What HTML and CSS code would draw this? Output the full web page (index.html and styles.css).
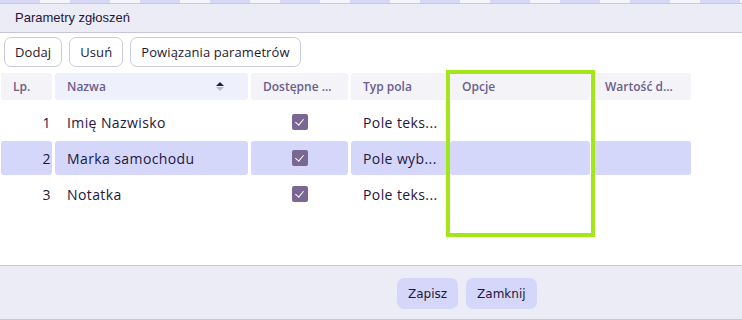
FILE: index.html
```html
<!DOCTYPE html>
<html>
  <head>
    <meta charset="utf-8">
    <title>Parametry zgłoszeń</title>
    <link rel="stylesheet" href="styles.css">
  </head>
  <body>
    <div class="backdrop"></div>

    <div class="dialog">
      <div class="titleBar">Parametry zgłoszeń</div>

      <div class="toolbar">
        <button class="toolButton">Dodaj</button>
        <button class="toolButton">Usuń</button>
        <button class="toolButton">Powiązania parametrów</button>
      </div>

      <div class="gridWrap">
        <div class="grid">
          <div class="head">Lp.</div>
          <div class="head headSorted">Nazwa
            <span class="sortIcon"><i class="up"></i><i class="down"></i></span>
          </div>
          <div class="head">Dostępne ...</div>
          <div class="head">Typ pola</div>
          <div class="head">Opcje</div>
          <div class="head">Wartość d...</div>

          <div class="cell num">1</div>
          <div class="cell">Imię Nazwisko</div>
          <div class="cell center"><span class="check"></span></div>
          <div class="cell">Pole teks...</div>
          <div class="cell"></div>
          <div class="cell"></div>

          <div class="cell num selected">2</div>
          <div class="cell selected">Marka samochodu</div>
          <div class="cell center selected"><span class="check"></span></div>
          <div class="cell selected">Pole wyb...</div>
          <div class="cell selected"></div>
          <div class="cell selected"></div>

          <div class="cell num">3</div>
          <div class="cell">Notatka</div>
          <div class="cell center"><span class="check"></span></div>
          <div class="cell">Pole teks...</div>
          <div class="cell"></div>
          <div class="cell"></div>
        </div>
        <div class="highlight"></div>
      </div>

      <div class="footer">
        <button class="footButton">Zapisz</button>
        <button class="footButton">Zamknij</button>
      </div>
    </div>
  </body>
</html>
```

FILE: styles.css
```css
body {
  margin: 0;
  background-color: #fff;
  font-family: "Open Sans", "Noto Sans", sans-serif;
  color: #221641;
}

.backdrop {
  height: 3px;
  background: repeating-linear-gradient(90deg, #d7d8f6 0px, #d7d8f6 40px, #f4f4fb 40px, #f4f4fb 70px);
}

.dialog {
  border-top: 1px solid #c9c9dd;
}

.titleBar {
  height: 28px;
  line-height: 28px;
  padding-left: 15px;
  background-color: #ececf6;
  border-bottom: 1px solid #c5c6dc;
  font-family: "Liberation Sans", sans-serif;
  font-size: 13px;
  color: #1d1638;
}

.toolbar {
  display: flex;
  gap: 7px;
  padding: 4px 4px 0 4px;
  height: 30px;
}

.toolButton {
  height: 30px;
  padding: 0 10px;
  background-color: #fff;
  border: 1px solid #c9c9dd;
  border-radius: 7px;
  font-family: "Open Sans", sans-serif;
  font-size: 13px;
  letter-spacing: 0.1px;
  color: #1e1a2e;
}

.gridWrap {
  position: relative;
  height: 192px;
  padding: 6px 0 0 1px;
}

.grid {
  display: grid;
  grid-template-columns: 51px 193px 97px 96px 140px 98px;
  grid-template-rows: 30px 34px 34px 34px;
  column-gap: 3px;
  row-gap: 2px;
}

.head {
  display: flex;
  align-items: center;
  padding-left: 12px;
  background-color: #f3f3f8;
  border-radius: 3px;
  font-size: 12px;
  font-weight: 600;
  color: #6d5e8c;
  margin-bottom: 3px;
}

.headSorted {
  background-color: #eef0fc;
  justify-content: space-between;
  padding-right: 24px;
}

.sortIcon {
  display: flex;
  flex-direction: column;
  gap: 1px;
}

.sortIcon i {
  width: 0;
  height: 0;
  border-left: 4px solid transparent;
  border-right: 4px solid transparent;
}

.sortIcon .up {
  border-bottom: 4px solid #2a1850;
}

.sortIcon .down {
  border-top: 4px solid #b9b9c6;
}

.cell {
  display: flex;
  align-items: center;
  padding-left: 12px;
  border-radius: 3px;
  font-size: 14px;
  letter-spacing: 0.4px;
  white-space: nowrap;
  overflow: hidden;
}

.num {
  justify-content: flex-end;
  padding-left: 0;
  padding-right: 1px;
}

.center {
  justify-content: center;
  padding-left: 0;
}

.selected {
  background-color: #d5d7fa;
}

.check {
  width: 16px;
  height: 16px;
  border-radius: 2px;
  background-color: #7b6794;
  position: relative;
}

.check::after {
  content: "";
  position: absolute;
  left: 5px;
  top: 3px;
  width: 4px;
  height: 7px;
  border-right: 1.5px solid #fff;
  border-bottom: 1.5px solid #fff;
  transform: rotate(40deg);
}

.highlight {
  position: absolute;
  left: 446px;
  top: 3px;
  width: 141px;
  height: 159px;
  border: 4px solid #a3e61a;
}

.footer {
  display: flex;
  gap: 8px;
  height: 55px;
  padding: 12px 0 0 397px;
  box-sizing: border-box;
  background-color: #ececf6;
  border-top: 1px solid #c5c6dc;
  border-bottom: 1px solid #c5c6dc;
}

.footButton {
  height: 31px;
  padding: 0 11px;
  background-color: #d5d7fa;
  border: none;
  border-radius: 7px;
  font-family: "DejaVu Sans", "Liberation Sans", sans-serif;
  font-size: 12px;
  color: #1d1638;
}
```
